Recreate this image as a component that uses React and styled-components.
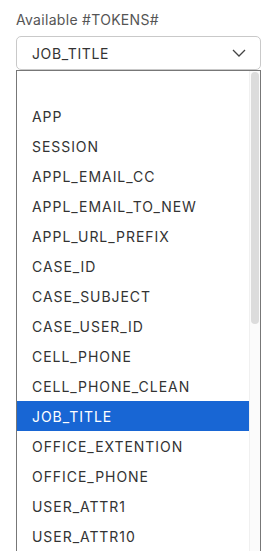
import styled, { createGlobalStyle } from "styled-components";

const GlobalStyle = createGlobalStyle`
  html, body {
    margin: 0;
    padding: 0;
    background: #ffffff;
  }
  body {
    font-family: "Inter", "Liberation Sans", sans-serif;
    overflow: hidden;
  }
`;

const Page = styled.div`
  width: 265px;
  height: 551px;
  overflow: hidden;
  padding: 12px 4px 0 16px;
  box-sizing: border-box;
`;

const Label = styled.div`
  font-size: 14px;
  line-height: 16px;
  color: #555555;
  letter-spacing: 0.3px;
  margin-bottom: 8px;
`;

const Select = styled.div`
  display: flex;
  align-items: center;
  justify-content: space-between;
  height: 34px;
  box-sizing: border-box;
  border: 1px solid #c9c9c9;
  border-radius: 5px;
  padding: 0 14px 0 15px;
  font-size: 14px;
  color: #333333;
  letter-spacing: 0.6px;
`;

const Listbox = styled.div`
  display: flex;
  border: 1px solid #777777;
  border-bottom: none;
  height: 490px;
  box-sizing: border-box;
`;

const Options = styled.ul`
  flex: 1;
  list-style: none;
  margin: 0;
  padding: 0;
`;

const Option = styled.li`
  height: 30px;
  display: flex;
  align-items: center;
  padding-left: 15px;
  font-size: 14px;
  letter-spacing: 0.95px;
  color: ${(p) => (p.$active ? "#ffffff" : "#333333")};
  background: ${(p) => (p.$active ? "#1866d4" : "transparent")};
`;

const Track = styled.div`
  width: 11px;
  background: #fbfbfb;
  border-left: 1px solid #f0f0f0;
  padding: 1px 1px 0 1px;
  box-sizing: border-box;
`;

const Thumb = styled.div`
  height: 252px;
  border-radius: 5px;
  background: #dcdcdc;
`;

const tokens = [
  "",
  "APP",
  "SESSION",
  "APPL_EMAIL_CC",
  "APPL_EMAIL_TO_NEW",
  "APPL_URL_PREFIX",
  "CASE_ID",
  "CASE_SUBJECT",
  "CASE_USER_ID",
  "CELL_PHONE",
  "CELL_PHONE_CLEAN",
  "JOB_TITLE",
  "OFFICE_EXTENTION",
  "OFFICE_PHONE",
  "USER_ATTR1",
  "USER_ATTR10",
];

function Chevron() {
  return (
    <svg width="14" height="8" viewBox="0 0 14 8" fill="none">
      <path d="M1 1l6 6 6-6" stroke="#444" strokeWidth="1.3" />
    </svg>
  );
}

export default function App() {
  const selected = "JOB_TITLE";
  return (
    <Page>
      <GlobalStyle />
      <Label>Available #TOKENS#</Label>
      <Select>
        <span>{selected}</span>
        <Chevron />
      </Select>
      <Listbox>
        <Options>
          {tokens.map((t, i) => (
            <Option key={i} $active={t === selected}>
              {t}
            </Option>
          ))}
        </Options>
        <Track>
          <Thumb />
        </Track>
      </Listbox>
    </Page>
  );
}
